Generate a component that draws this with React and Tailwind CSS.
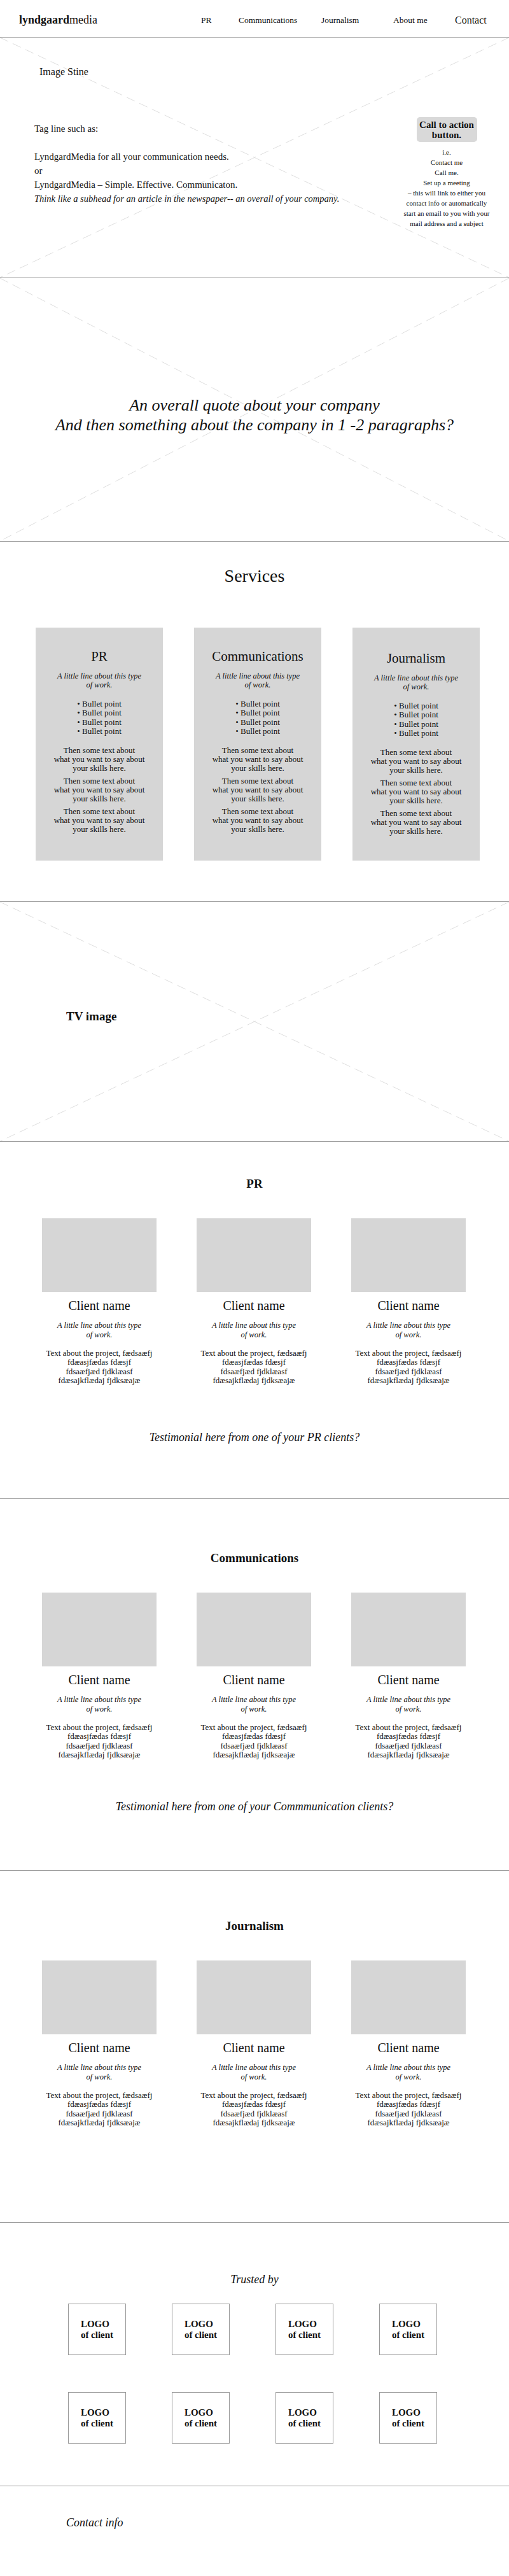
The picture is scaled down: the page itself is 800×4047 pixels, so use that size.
import React from "react";

function XMark() {
  return (
    <svg className="absolute inset-0 w-full h-full pointer-events-none" xmlns="http://www.w3.org/2000/svg">
      <line x1="0" y1="0" x2="100%" y2="100%" stroke="#dedede" strokeWidth="1" strokeDasharray="14 8" />
      <line x1="100%" y1="0" x2="0" y2="100%" stroke="#dedede" strokeWidth="1" strokeDasharray="14 8" />
    </svg>
  );
}

function ServiceCard({ title, pt }) {
  const para = (
    <p>
      Then some text about
      <br />
      what you want to say about
      <br />
      your skills here.
    </p>
  );
  return (
    <div className={`bg-[#d6d6d6] h-[366px] text-center whitespace-nowrap ${pt}`}>
      <div className="text-[21px] leading-[24px]">{title}</div>
      <p className="mt-[12px] italic text-[12.5px] leading-[14px]">
        A little line about this type
        <br />
        of work.
      </p>
      <div className="mt-[16px] text-[13px] leading-[14.4px]">
        <div>• Bullet point</div>
        <div>• Bullet point</div>
        <div>• Bullet point</div>
        <div>• Bullet point</div>
      </div>
      <div className="mt-[15px] text-[13px] leading-[14.4px] flex flex-col gap-[4.8px]">
        {para}
        {para}
        {para}
      </div>
    </div>
  );
}

function ClientCol() {
  return (
    <div className="text-center whitespace-nowrap">
      <div className="h-[116px] bg-[#d6d6d6]" />
      <div className="mt-[9px] text-[20px] leading-[24px]">Client name</div>
      <p className="mt-[12px] italic text-[12.5px] leading-[14.5px]">
        A little line about this type
        <br />
        of work.
      </p>
      <p className="mt-[15px] text-[13px] leading-[14.4px]">
        Text about the project, fædsaæfj
        <br />
        fdæasjfædas fdæsjf
        <br />
        fdsaæfjæd fjdklæasf
        <br />
        fdæsajkflædaj fjdksæajæ
      </p>
    </div>
  );
}

function ClientSection({ sectionClass, title, testimonial, testimonialClass }) {
  return (
    <section className={`border-b border-[#999] ${sectionClass}`}>
      <h2 className="text-center font-bold text-[19px] leading-[24px]">{title}</h2>
      <div className="mt-[42px] pl-[66px] grid grid-cols-[180px_180px_180px] gap-x-[63px]">
        <ClientCol />
        <ClientCol />
        <ClientCol />
      </div>
      {testimonial && (
        <p className={`text-center italic text-[18px] leading-[24px] ${testimonialClass}`}>{testimonial}</p>
      )}
    </section>
  );
}

function LogoBox() {
  return (
    <div className="h-[81px] border border-[#999] flex items-center justify-center">
      <div className="text-left font-bold text-[15px] leading-[16.5px] whitespace-nowrap">
        LOGO
        <br />
        of client
      </div>
    </div>
  );
}

export default function App() {
  return (
    <div className="w-full bg-white text-[#111] font-['Liberation_Serif',serif]">
      {/* Header */}
      <header className="h-[59px] border-b border-[#999] flex items-center pt-[4px] whitespace-nowrap">
        <div className="w-[316px] pl-[30px] text-[18px]">
          <span className="font-bold">lyndgaard</span>media
        </div>
        <div className="w-[59px] text-[13.5px] mt-[3px]">PR</div>
        <div className="w-[130px] text-[13.5px] mt-[3px]">Communications</div>
        <div className="w-[113px] text-[13.5px] mt-[3px]">Journalism</div>
        <div className="w-[97px] text-[13.5px] mt-[3px]">About me</div>
        <div className="text-[16px] mt-[2px]">Contact</div>
      </header>

      {/* Hero */}
      <section className="relative h-[378px] border-b border-[#999] flex">
        <XMark />
        <div className="relative flex-1 pt-[44px] pl-[54px] whitespace-nowrap">
          <div className="pl-[8px] text-[16px] leading-[20px]">Image Stine</div>
          <div className="mt-[68px] text-[15px] leading-[22px]">
            <p>Tag line such as:</p>
            <p>&nbsp;</p>
            <p>LyndgardMedia for all your communication needs.</p>
            <p>or</p>
            <p>LyndgardMedia – Simple. Effective. Communicaton.</p>
            <p className="italic text-[14.5px]">Think like a subhead for an article in the newspaper-- an overall of your company.</p>
          </div>
        </div>
        <div className="relative w-[150px] mr-[23px] pt-[125px] flex flex-col items-center">
          <div className="w-[95px] h-[39px] rounded-[5px] bg-[#d9d9d9] flex items-center justify-center text-center font-bold text-[15px] leading-[16px] whitespace-nowrap">
            Call to action
            <br />
            button.
          </div>
          <p className="mt-[8px] text-[11px] leading-[16px] text-center whitespace-nowrap">
            i.e.
            <br />
            Contact me
            <br />
            Call me.
            <br />
            Set up a meeting
            <br />– this will link to either you
            <br />
            contact info or automatically
            <br />
            start an email to you with your
            <br />
            mail address and a subject
          </p>
        </div>
      </section>

      {/* Quote */}
      <section className="relative h-[414px] border-b border-[#999]">
        <XMark />
        <p className="relative pt-[184px] text-center italic text-[26px] leading-[31px] whitespace-nowrap">
          An overall quote about your company
          <br />
          And then something about the company in 1 -2 paragraphs?
        </p>
      </section>

      {/* Services */}
      <section className="h-[566px] border-b border-[#999] pt-[38px]">
        <h2 className="text-center text-[28px] leading-[32px]">Services</h2>
        <div className="mt-[65px] pl-[56px] grid grid-cols-[200px_200px_200px] gap-x-[49px]">
          <ServiceCard title="PR" pt="pt-[33px]" />
          <ServiceCard title="Communications" pt="pt-[33px]" />
          <ServiceCard title="Journalism" pt="pt-[36px]" />
        </div>
      </section>

      {/* TV image */}
      <section className="relative h-[377px] border-b border-[#999]">
        <XMark />
        <div className="relative pt-[168px] pl-[104px] font-bold text-[19px] leading-[24px]">TV image</div>
      </section>

      <ClientSection
        sectionClass="h-[561px] pt-[54px]"
        title="PR"
        testimonial="Testimonial here from one of your PR clients?"
        testimonialClass="mt-[69px]"
      />
      <ClientSection
        sectionClass="h-[584px] pt-[81px]"
        title="Communications"
        testimonial="Testimonial here from one of your Commmunication clients?"
        testimonialClass="mt-[61px]"
      />
      <ClientSection sectionClass="h-[553px] pt-[75px]" title="Journalism" />

      {/* Trusted by */}
      <section className="h-[414px] border-b border-[#999] pt-[77px]">
        <h2 className="text-center italic text-[18px] leading-[24px]">Trusted by</h2>
        <div className="mt-[26px] pl-[107px] grid grid-cols-[91px_91px_91px_91px] gap-x-[72px] gap-y-[58px]">
          <LogoBox />
          <LogoBox />
          <LogoBox />
          <LogoBox />
          <LogoBox />
          <LogoBox />
          <LogoBox />
          <LogoBox />
        </div>
      </section>

      {/* Contact */}
      <section className="h-[141px] pt-[45px] pl-[104px]">
        <p className="italic text-[18px] leading-[24px]">Contact info</p>
      </section>
    </div>
  );
}
